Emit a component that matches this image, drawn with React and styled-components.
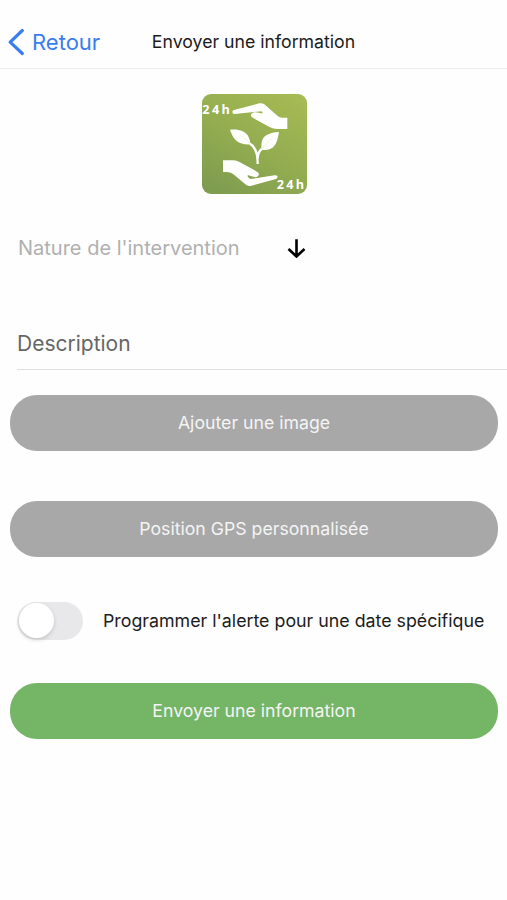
import { useState } from "react";
import styled, { createGlobalStyle } from "styled-components";

function App() {

  const [scheduled, setScheduled] = useState(false);

  return (
    <Screen>
      <GlobalStyle />
      <Header>
        <BackButton>
          <svg width="16" height="28" viewBox="0 0 16 28">
            <path d="M14.3 2.5L2.2 14.2L14.3 25.5" fill="none" stroke="currentColor" strokeWidth="3.2" strokeLinecap="round" strokeLinejoin="round" />
          </svg>
          <BackLabel>Retour</BackLabel>
        </BackButton>
        <Title>Envoyer une information</Title>
      </Header>
      <LogoWrapper>
        <Logo />
      </LogoWrapper>
      <SelectRow>
        <Placeholder>Nature de l'intervention</Placeholder>
        <svg width="20" height="20" viewBox="0 0 20 20">
          <path d="M10.5 1.3V18M2.5 11L10.5 18.5L18.5 11" fill="none" stroke="#000" strokeWidth="2.6" />
        </svg>
      </SelectRow>
      <Field>
        <FieldLabel>Description</FieldLabel>
      </Field>
      <Actions>
        <Button><Label>Ajouter une image</Label></Button>
        <Button><Label>Position GPS personnalisée</Label></Button>
      </Actions>
      <SwitchRow>
        <Switch role="switch" aria-checked={scheduled} $on={scheduled} onClick={() => setScheduled(!scheduled)}>
          <Knob />
        </Switch>
        <SwitchLabel>Programmer l'alerte pour une date spécifique</SwitchLabel>
      </SwitchRow>
      <Button $primary><Label>Envoyer une information</Label></Button>
    </Screen>
  );
}

function Logo() {
  return (
    <svg width="105" height="100" viewBox="24 17 315 300">
      <defs>
        <linearGradient id="leaf" x1="0.8" y1="0" x2="0.2" y2="1">
          <stop offset="0" stopColor="#a5b954" />
          <stop offset="0.5" stopColor="#94ad50" />
          <stop offset="1" stopColor="#7f9d50" />
        </linearGradient>
      </defs>
      <rect x="24" y="17" width="315" height="300" rx="27" fill="url(#leaf)" />
      <g fill="#fff">
        <path d="M120 65L196 45Q204 43 211 48L252 84Q257 88 264 88H280V122H248Q235 121 225 115L174 87Q169 83 172 77Q176 71 185 72L201 75Q207 76 205 72L202 69L122 77Q115 77 115 71Q115 67 120 65Z" />
        <path d="M87 216H118Q128 216 138 222L189 250Q198 255 193 262Q188 269 178 265L163 261Q158 260 163 267L169 272L242 261Q251 260 251 266Q250 271 243 273L170 293Q162 294 156 289L120 259Q112 251 99 251H87Z" />
        <path d="M108 124C132 121 152 127 162 142Q168 152 169 168C150 169 134 165 124 154Q115 145 108 124Z" />
        <path d="M255 131C232 132 213 139 206 152Q201 163 202 184C219 187 234 183 243 170Q251 157 255 131Z" />
      </g>
      <path d="M167 166Q191 178 191 227M203 182Q192 190 191 210" fill="none" stroke="#fff" strokeWidth="7" />
      <path d="M140 142Q156 151 166 164M235 150Q216 163 205 180" fill="none" stroke="#dbe4c4" strokeWidth="1.5" />
      <LogoText x="25" y="78">24h</LogoText>
      <LogoText x="248" y="303">24h</LogoText>
    </svg>
  );
}

const GlobalStyle = createGlobalStyle`
  * {
    box-sizing: border-box;
  }
  body {
    margin: 0;
    background: #fefefe;
    font-family: Inter, "Liberation Sans", sans-serif;
  }
  svg {
    display: block;
    flex-shrink: 0;
  }
  button {
    border: none;
    padding: 0;
    font-family: inherit;
    cursor: pointer;
  }
`;

const Screen = styled.div`
  display: flex;
  flex-direction: column;
  height: 900px;
  overflow: hidden;
`;

const Header = styled.header`
  display: grid;
  grid-template-columns: 1fr auto 1fr;
  align-items: center;
  height: 69px;
  padding: 15px 8px 0;
  border-bottom: 1px solid #eeeeee;
`;

const BackButton = styled.button`
  display: flex;
  align-items: center;
  gap: 8px;
  background: none;
  color: #3a7df0;
`;

const BackLabel = styled.span`
  font-size: 22px;
  line-height: 28px;
`;

const Title = styled.h1`
  margin: 0;
  font-size: 17.7px;
  font-weight: 400;
  line-height: 24px;
  color: #1c1c1c;
`;

const LogoWrapper = styled.div`
  display: flex;
  justify-content: center;
  padding: 25px 0 0 1px;
`;

const LogoText = styled.text`
  fill: #fff;
  font-family: "Open Sans", sans-serif;
  font-size: 38px;
  font-weight: 700;
  letter-spacing: 7px;
`;

const SelectRow = styled.div`
  display: flex;
  align-items: center;
  justify-content: space-between;
  width: 306px;
  height: 30px;
  margin-top: 39px;
  padding-left: 18px;
`;

const Placeholder = styled.span`
  font-size: 20px;
  line-height: 24px;
  padding-bottom: 1px;
  color: #b0b0b0;
`;

const Field = styled.div`
  display: flex;
  align-items: center;
  height: 54px;
  margin: 53px 0 0 17px;
  padding-top: 2px;
  border-bottom: 1px solid #dedede;
`;

const FieldLabel = styled.span`
  font-size: 21px;
  color: #666;
`;

const Actions = styled.div`
  display: flex;
  flex-direction: column;
  gap: 50px;
  margin-top: 25px;
`;

const Button = styled.button`
  display: flex;
  flex-shrink: 0;
  justify-content: center;
  align-items: center;
  height: 56px;
  margin: 0 9px 0 10px;
  border-radius: 27px;
  background: ${(props) => (props.$primary ? "#75b566" : "#a8a8a8")};
  color: #f4f4f4;
`;

const Label = styled.span`
  font-size: 17.7px;
  line-height: 24px;
`;

const SwitchRow = styled.div`
  display: flex;
  align-items: center;
  gap: 20px;
  height: 39px;
  margin: 44px 0 43px;
  padding-left: 17px;
`;

const Switch = styled.button`
  display: flex;
  align-items: center;
  justify-content: ${(props) => (props.$on ? "flex-end" : "flex-start")};
  width: 66px;
  height: 38px;
  padding: 2px;
  border-radius: 20px;
  background: ${(props) => (props.$on ? "#75b566" : "#e8e8ea")};
`;

const Knob = styled.span`
  width: 35px;
  height: 35px;
  border-radius: 50%;
  background: #fff;
  box-shadow: 0 2px 4px rgba(0, 0, 0, 0.15);
`;

const SwitchLabel = styled.span`
  font-size: 17.8px;
  line-height: 24px;
  white-space: nowrap;
  color: #1c1c1c;
`;

export default App;
